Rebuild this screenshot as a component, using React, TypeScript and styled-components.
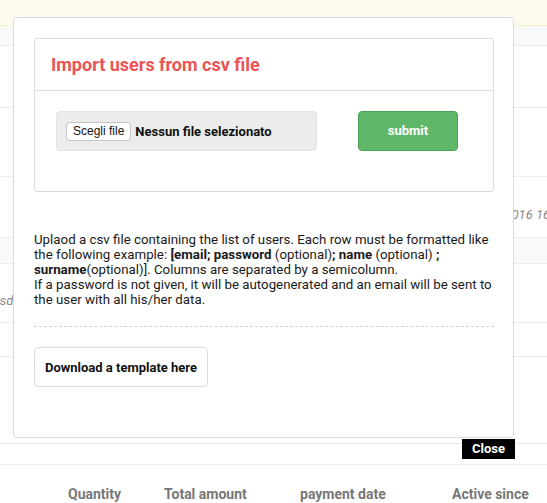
import React from "react";
import styled, { createGlobalStyle } from "styled-components";

const Global = createGlobalStyle`
  html, body { margin: 0; padding: 0; background: #fff; }
  body { font-family: Roboto, "Liberation Sans", Arial, sans-serif; color: #222; }
  * { box-sizing: border-box; }
`;

const Page = styled.div`
  position: relative;
  width: 547px;
  height: 503px;
  overflow: hidden;
  background: #fff;
`;

const Backdrop = styled.div`
  display: flex;
  flex-direction: column;
`;

const Row = styled.div<{ $h: number; $bg?: string; $line?: string }>`
  height: ${(p) => p.$h}px;
  background: ${(p) => p.$bg || "#fff"};
  border-bottom: 1px solid ${(p) => p.$line || "#ececec"};
  display: flex;
  align-items: center;
  flex-shrink: 0;
  overflow: hidden;
`;

const Faded = styled.span<{ $x: number }>`
  font-style: italic;
  font-size: 13px;
  color: #888;
  margin-left: ${(p) => p.$x}px;
  white-space: nowrap;
  padding-top: 14px;
`;

const HeaderRow = styled.div`
  display: grid;
  grid-template-columns: 96px 136px 152px auto;
  height: 40px;
  align-items: center;
  padding: 18px 0 0 68px;
  font-weight: 700;
  font-size: 14px;
  color: #777;
  white-space: nowrap;
`;

const Modal = styled.div`
  position: absolute;
  left: 13px;
  top: 17px;
  width: 501px;
  height: 421px;
  background: #fff;
  border: 1px solid #dcdcdc;
  border-radius: 4px;
  padding: 20px 19px 20px 20px;
`;

const Panel = styled.div`
  border: 1px solid #ddd;
  border-radius: 3px;
`;

const PanelHeader = styled.div`
  height: 52px;
  border-bottom: 1px solid #ddd;
  display: flex;
  align-items: center;
  padding: 0 16px;
`;

const Title = styled.h3`
  margin: 0;
  font-size: 18px;
  font-weight: 700;
  color: #ea5455;
`;

const PanelBody = styled.div`
  height: 100px;
  padding: 20px 21px;
  display: flex;
  align-items: flex-start;
`;

const FileBox = styled.div`
  width: 261px;
  height: 40px;
  background: #ececec;
  border: 1px solid #e2e2e2;
  border-radius: 4px;
  display: flex;
  align-items: center;
  padding-left: 9px;
  gap: 4px;
`;

const ChooseBtn = styled.span`
  font-family: "Liberation Sans", Arial, sans-serif;
  font-size: 12px;
  color: #111;
  background: #fff;
  border: 1px solid #c4c4c4;
  border-radius: 4px;
  padding: 1px 6px 2px;
  line-height: 14px;
`;

const FileName = styled.span`
  font-size: 13px;
  font-weight: 700;
  color: #111;
`;

const Submit = styled.button`
  margin-left: 41px;
  width: 100px;
  height: 40px;
  background: #5fb86a;
  border: 1px solid #47a152;
  border-radius: 4px;
  color: #fff;
  font-family: Roboto, "Liberation Sans", Arial, sans-serif;
  font-weight: 700;
  font-size: 13px;
  padding: 0 0 2px;
`;

const Help = styled.p`
  margin: 40px 0 0;
  font-size: 13.3px;
  line-height: 15px;
  color: #1a1a1a;
  white-space: nowrap;
  b { font-weight: 700; }
`;

const Dashed = styled.hr`
  margin: 19px 0 0;
  border: 0;
  border-top: 1px dashed #d4d4d4;
  height: 0;
`;

const Download = styled.button`
  margin-top: 20px;
  width: 174px;
  height: 40px;
  background: #fff;
  border: 1px solid #dcdcdc;
  border-radius: 4px;
  font-family: Roboto, "Liberation Sans", Arial, sans-serif;
  font-weight: 700;
  font-size: 13px;
  color: #111;
`;

const Close = styled.div`
  position: absolute;
  left: 462px;
  top: 439px;
  width: 53px;
  height: 20px;
  background: #000;
  color: #fff;
  font-weight: 700;
  font-size: 13px;
  display: flex;
  align-items: center;
  justify-content: center;
  padding-bottom: 2px;
`;

export default function App() {
  return (
    <Page>
      <Global />
      <Backdrop>
        <Row $h={26} $bg="#fffaee" $line="#f7eccd" />
        <Row $h={20} $bg="#f9f9f9" />
        <Row $h={62} />
        <Row $h={69} />
        <Row $h={61}>
          <Faded $x={485}>05/2016 16:32</Faded>
        </Row>
        <Row $h={26} $bg="#fafafa" />
        <Row $h={59}>
          <Faded $x={-7}>asda</Faded>
        </Row>
        <Row $h={34} />
        <Row $h={87} />
        <Row $h={21} />
        <HeaderRow>
          <span>Quantity</span>
          <span>Total amount</span>
          <span>payment date</span>
          <span>Active since</span>
        </HeaderRow>
      </Backdrop>

      <Modal>
        <Panel>
          <PanelHeader>
            <Title>Import users from csv file</Title>
          </PanelHeader>
          <PanelBody>
            <FileBox>
              <ChooseBtn>Scegli file</ChooseBtn>
              <FileName>Nessun file selezionato</FileName>
            </FileBox>
            <Submit>submit</Submit>
          </PanelBody>
        </Panel>
        <Help>
          Uplaod a csv file containing the list of users. Each row must be formatted like
          <br />
          the following example: <b>[email; password</b> (optional)<b>; name</b> (optional) <b>;</b>
          <br />
          <b>surname</b>(optional)]. Columns are separated by a semicolumn.
          <br />
          If a password is not given, it will be autogenerated and an email will be sent to
          <br />
          the user with all his/her data.
        </Help>
        <Dashed />
        <Download>Download a template here</Download>
      </Modal>
      <Close>Close</Close>
    </Page>
  );
}
